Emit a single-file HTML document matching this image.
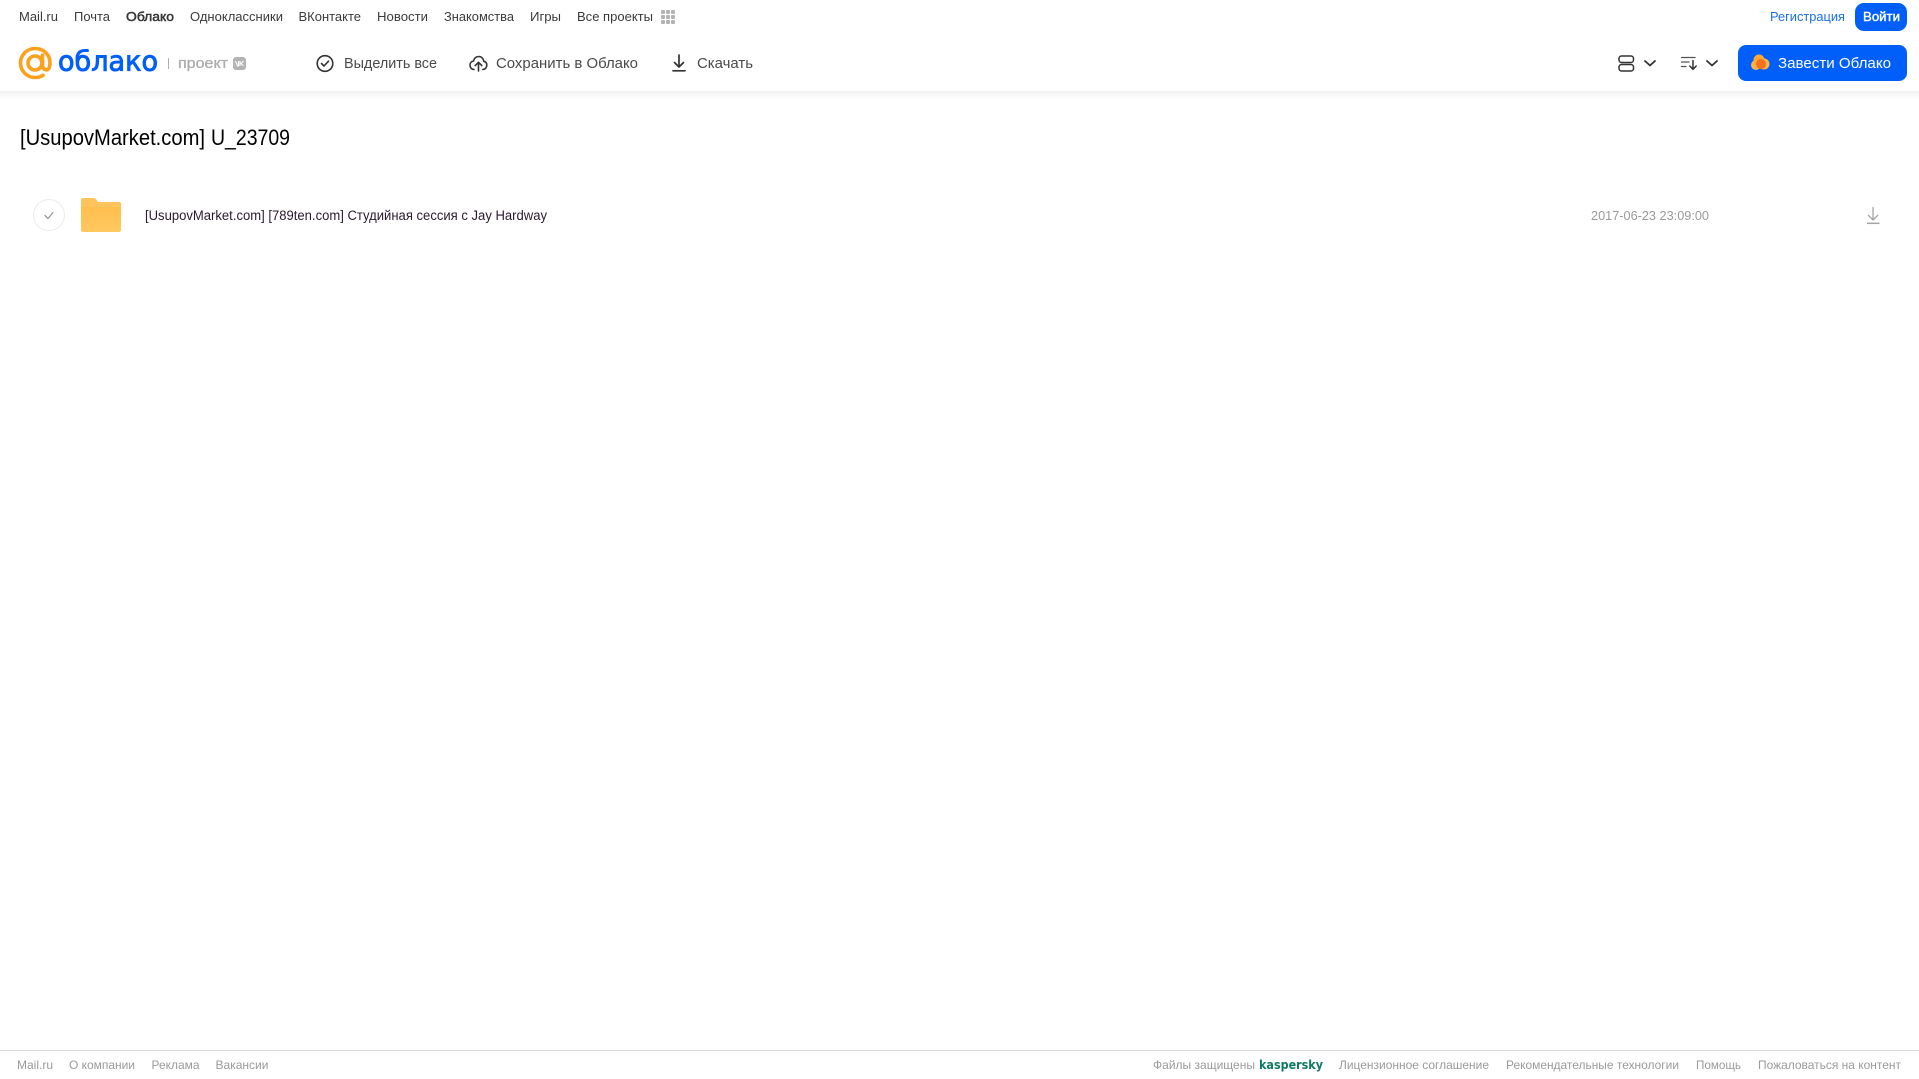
<!DOCTYPE html>
<html lang="ru">
<head>
<meta charset="utf-8">
<title>[UsupovMarket.com] U_23709</title>
<style>
html,body{margin:0;padding:0;background:#fff;width:1919px;height:1079px;overflow:hidden}
svg{position:absolute;left:0;top:0;display:block}
text{font-family:"Liberation Sans",sans-serif}
.n{font-size:13px;fill:#3a3a3a}
.t{font-size:15px;fill:#4a4a4a}
.f{font-size:12px;fill:#9a9a9a}
</style>
</head>
<body>
<svg width="1919" height="1079" viewBox="0 0 1919 1079" xmlns="http://www.w3.org/2000/svg">
<defs>
<linearGradient id="s" x1="0" y1="0" x2="0" y2="1"><stop offset="0" stop-color="#f2f2f2"/><stop offset="1" stop-color="#fff"/></linearGradient>
<linearGradient id="fo" x1="0" y1="0" x2="0" y2="1"><stop offset="0" stop-color="#ffbb48"/><stop offset="1" stop-color="#ffc85f"/></linearGradient>
</defs>
<rect x="0" y="91" width="1919" height="9" fill="url(#s)"/>

<!-- top nav -->
<text class="n" x="19" y="21" textLength="39" lengthAdjust="spacingAndGlyphs">Mail.ru</text>
<text class="n" x="74" y="21" textLength="36" lengthAdjust="spacingAndGlyphs">Почта</text>
<text class="n" x="126" y="21" textLength="48" lengthAdjust="spacingAndGlyphs" stroke="#2c2d2e" stroke-width="0.45">Облако</text>
<text class="n" x="190" y="21" textLength="93" lengthAdjust="spacingAndGlyphs">Одноклассники</text>
<text class="n" x="298.500" y="21" textLength="62.500" lengthAdjust="spacingAndGlyphs">ВКонтакте</text>
<text class="n" x="377" y="21" textLength="51" lengthAdjust="spacingAndGlyphs">Новости</text>
<text class="n" x="444" y="21" textLength="70" lengthAdjust="spacingAndGlyphs">Знакомства</text>
<text class="n" x="530" y="21" textLength="31" lengthAdjust="spacingAndGlyphs">Игры</text>
<text class="n" x="577" y="21" textLength="76" lengthAdjust="spacingAndGlyphs">Все проекты</text>
<g fill="#b3b3b3">
<rect x="661" y="10" width="4" height="4" rx="1"/><rect x="666" y="10" width="4" height="4" rx="1"/><rect x="671" y="10" width="4" height="4" rx="1"/>
<rect x="661" y="15" width="4" height="4" rx="1"/><rect x="666" y="15" width="4" height="4" rx="1"/><rect x="671" y="15" width="4" height="4" rx="1"/>
<rect x="661" y="20" width="4" height="4" rx="1"/><rect x="666" y="20" width="4" height="4" rx="1"/><rect x="671" y="20" width="4" height="4" rx="1"/>
</g>
<text class="n" x="1770" y="21" textLength="75" lengthAdjust="spacingAndGlyphs" style="fill:#1a6fe8">Регистрация</text>
<rect x="1855" y="3" width="52" height="28" rx="9" fill="#005ff9"/>
<text class="n" x="1863" y="21" textLength="37" lengthAdjust="spacingAndGlyphs" stroke="#fff" stroke-width="0.4" style="fill:#fff">Войти</text>

<!-- logo -->
<circle cx="35" cy="63" r="7" fill="none" stroke="#fda01e" stroke-width="3.600"/>
<path d="M42.500 55V65C42.500 68.500 44.700 69.800 46.500 69.800C49 69.800 50 66.500 50 63C50 54.500 43.500 48.500 35 48.500C27 48.500 20.500 55 20.500 63C20.500 71 27 77.500 35 77.500C38 77.500 40.500 76.800 43 75.300" fill="none" stroke="#fda01e" stroke-width="3.600" stroke-linecap="round"/>
<text x="58" y="70.500" font-size="28" textLength="100" lengthAdjust="spacingAndGlyphs" fill="#005ff9" stroke="#005ff9" stroke-width="0.9" style="font-family:'DejaVu Sans',sans-serif">облако</text>
<rect x="168" y="58" width="1" height="11" fill="#b0b0b0"/>
<text x="178" y="68" font-size="15" textLength="50" lengthAdjust="spacingAndGlyphs" fill="#adadad" stroke="#adadad" stroke-width="0.35">проект</text>
<rect x="233" y="57" width="13" height="13" rx="3" fill="#b3b3b3"/>
<path d="M235.500 61L237.500 66H238.500V61M243.500 61L241 63.500L243.500 66M240 61V66" fill="none" stroke="#fff" stroke-width="1.100"/>

<!-- toolbar -->
<circle cx="325" cy="63.500" r="7.800" fill="none" stroke="#333" stroke-width="1.600"/>
<path d="M321.500 63.500L324 66L328.500 61.200" fill="none" stroke="#333" stroke-width="1.600" stroke-linecap="round" stroke-linejoin="round"/>
<text class="t" x="344" y="68" textLength="93" lengthAdjust="spacingAndGlyphs">Выделить все</text>

<path d="M474 69.500C471.500 69.500 470 67.300 470 65.200C470 63 471.500 61.300 473.500 61C474.300 58 476.300 56.500 478.700 56.500C481.500 56.500 483.500 58.700 483.800 61.300C485.700 61.600 486.800 63.200 486.800 65.200C486.800 67.300 485.300 69.500 482.800 69.500" fill="none" stroke="#333" stroke-width="1.600" stroke-linecap="round"/>
<path d="M478.500 71V62.500M475.200 65.600L478.500 62.300L481.800 65.600" fill="none" stroke="#333" stroke-width="1.600" stroke-linecap="round" stroke-linejoin="round"/>
<text class="t" x="496" y="68" textLength="142" lengthAdjust="spacingAndGlyphs">Сохранить в Облако</text>

<path d="M679 55V67M674.500 62.500L679 67L683.500 62.500" fill="none" stroke="#333" stroke-width="1.700" stroke-linecap="round" stroke-linejoin="round"/>
<path d="M673 70.800H685" stroke="#333" stroke-width="1.700" stroke-linecap="round"/>
<text class="t" x="697" y="68" textLength="56" lengthAdjust="spacingAndGlyphs">Скачать</text>

<!-- right toolbar -->
<rect x="1619" y="56" width="14.500" height="6.500" rx="2.500" fill="none" stroke="#333" stroke-width="1.500"/>
<rect x="1619" y="64.500" width="14.500" height="6.500" rx="2.500" fill="none" stroke="#333" stroke-width="1.500"/>
<path d="M1645 61L1650 65.500L1655 61" fill="none" stroke="#333" stroke-width="1.800" stroke-linecap="round" stroke-linejoin="round"/>
<path d="M1681.500 57.500H1695M1681.500 62H1689M1681.500 66.500H1686" stroke="#555" stroke-width="1.300" stroke-linecap="round"/>
<path d="M1693 60.500V69M1689.800 66L1693 69.300L1696.200 66" fill="none" stroke="#333" stroke-width="1.500" stroke-linecap="round" stroke-linejoin="round"/>
<path d="M1707 61L1712 65.500L1717 61" fill="none" stroke="#333" stroke-width="1.800" stroke-linecap="round" stroke-linejoin="round"/>

<rect x="1738" y="45" width="169" height="36" rx="8" fill="#005ff9"/>
<circle cx="1756" cy="65" r="5" fill="#ffb445"/>
<circle cx="1759" cy="60" r="5.500" fill="#ffa930"/>
<circle cx="1764" cy="64" r="5.500" fill="#ffb445"/>
<circle cx="1761" cy="64" r="5" fill="#f5701f"/>
<text class="t" x="1778" y="68" textLength="113" lengthAdjust="spacingAndGlyphs" style="fill:#fff">Завести Облако</text>

<!-- title -->
<text x="20" y="145" font-size="22" textLength="185" lengthAdjust="spacingAndGlyphs" fill="#000">[UsupovMarket.com]</text>
<text x="211" y="145" font-size="22" textLength="79" lengthAdjust="spacingAndGlyphs" fill="#000">U_23709</text>

<!-- row -->
<circle cx="49" cy="215" r="15.500" fill="#fff" stroke="#ececec" stroke-width="1"/>
<path d="M45 215.500L48 218.500L53 212.500" fill="none" stroke="#999" stroke-width="1.300" stroke-linecap="round" stroke-linejoin="round"/>
<path d="M81 200C81 198.900 81.900 198 83 198H93C95 198 96 199 97 200.500L98 202H119C120.100 202 121 202.900 121 204V230C121 231.100 120.100 232 119 232H83C81.900 232 81 231.100 81 230Z" fill="url(#fo)"/>
<path d="M81 200C81 198.900 81.900 198 83 198H93C95 198 96 199 97 200.500L98 202H119C120.100 202 121 202.900 121 204V207H81Z" fill="#ffc35b"/>
<text x="145" y="220" font-size="13.500" textLength="402" lengthAdjust="spacingAndGlyphs" fill="#2a1a2e">[UsupovMarket.com] [789ten.com] Студийная сессия с Jay Hardway</text>
<text x="1591" y="220" font-size="13" textLength="118" lengthAdjust="spacingAndGlyphs" fill="#999">2017-06-23 23:09:00</text>
<path d="M1873 207V220M1868 215L1873 220L1878 215" fill="none" stroke="#a3a3a3" stroke-width="1.300" stroke-linejoin="round"/>
<path d="M1867 223.300H1879.500" stroke="#a3a3a3" stroke-width="1.500"/>

<!-- footer -->
<rect x="0" y="1050" width="1919" height="1" fill="#d9d9d9"/>
<text class="f" x="17" y="1069" textLength="36" lengthAdjust="spacingAndGlyphs">Mail.ru</text>
<text class="f" x="69" y="1069" textLength="66" lengthAdjust="spacingAndGlyphs">О компании</text>
<text class="f" x="151.500" y="1069" textLength="48" lengthAdjust="spacingAndGlyphs">Реклама</text>
<text class="f" x="215.500" y="1069" textLength="53" lengthAdjust="spacingAndGlyphs">Вакансии</text>
<text class="f" x="1153" y="1069" textLength="102" lengthAdjust="spacingAndGlyphs">Файлы защищены</text>
<text x="1259" y="1069" font-size="12.500" font-weight="700" textLength="64" lengthAdjust="spacingAndGlyphs" fill="#0f7a62" style="font-family:'DejaVu Sans',sans-serif">kaspersky</text>
<text class="f" x="1339" y="1069" textLength="150" lengthAdjust="spacingAndGlyphs">Лицензионное соглашение</text>
<text class="f" x="1506" y="1069" textLength="173" lengthAdjust="spacingAndGlyphs">Рекомендательные технологии</text>
<text class="f" x="1696" y="1069" textLength="45" lengthAdjust="spacingAndGlyphs">Помощь</text>
<text class="f" x="1758" y="1069" textLength="143" lengthAdjust="spacingAndGlyphs">Пожаловаться на контент</text>
</svg>
</body>
</html>
